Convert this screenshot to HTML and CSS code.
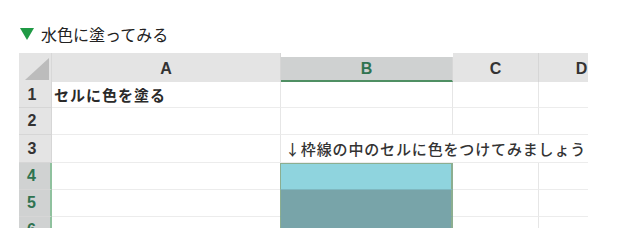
FILE: index.html
```html
<!DOCTYPE html>
<html lang="ja">
<head>
    <meta charset="UTF-8">
    <title>水色に塗ってみる</title>
    <link rel="stylesheet" href="styles.css">
</head>
<body>
    <div class="page">
        <h3 class="title"><span class="mark"></span>水色に塗ってみる</h3>
        <div class="sheet">
            <div class="corner"></div>
            <div class="col">A</div>
            <div class="col sel">B</div>
            <div class="col">C</div>
            <div class="col">D</div>

            <div class="num">1</div>
            <div class="cell bold">セルに色を塗る</div>
            <div class="cell"></div>
            <div class="cell"></div>
            <div class="cell"></div>

            <div class="num">2</div>
            <div class="cell"></div>
            <div class="cell"></div>
            <div class="cell"></div>
            <div class="cell"></div>

            <div class="num">3</div>
            <div class="cell"></div>
            <div class="cell wide">↓枠線の中のセルに色をつけてみましょう</div>

            <div class="num sel">4</div>
            <div class="cell"></div>
            <div class="cell light top"></div>
            <div class="cell"></div>
            <div class="cell"></div>

            <div class="num sel">5</div>
            <div class="cell"></div>
            <div class="cell dark"></div>
            <div class="cell"></div>
            <div class="cell"></div>

            <div class="num sel">6</div>
            <div class="cell"></div>
            <div class="cell dark"></div>
            <div class="cell"></div>
            <div class="cell"></div>
        </div>
    </div>
</body>
</html>
```

FILE: styles.css
```css
body{
    margin: 0;
    background: #fff;
    font-family: "Noto Sans CJK JP", "Noto Sans", sans-serif;
    color: #222;
}
.page{
    padding: 24px 0 0 19px;
}
.title{
    display: flex;
    align-items: center;
    gap: 7px;
    margin: 0 0 9px 1px;
    font-size: 16px;
    font-weight: normal;
    line-height: 20px;
    color: #222;
}
.mark{
    width: 0;
    height: 0;
    border-left: 7px solid transparent;
    border-right: 7px solid transparent;
    border-top: 12px solid #1f9a45;
}
.sheet{
    display: grid;
    grid-template-columns: 33px 229px 172px 86px 86px;
    grid-template-rows: 29px 26px 27px 28px 27px 27px 27px;
    width: 569px;
    height: 175px;
    overflow: hidden;
}
.corner{
    position: relative;
    background: #e4e4e4;
    border-right: 1px solid #d8d8d8;
}
.corner::after{
    content: "";
    position: absolute;
    right: 2px;
    bottom: 2px;
    width: 24px;
    height: 22px;
    background: #bcbcbc;
    clip-path: polygon(100% 0, 100% 100%, 0 100%);
}
.col{
    display: flex;
    align-items: flex-end;
    justify-content: center;
    padding-bottom: 4px;
    background: #e4e4e4;
    border-right: 1px solid #d6d6d6;
    font-family: "Liberation Sans", Arial, sans-serif;
    font-weight: bold;
    font-size: 16px;
    color: #333;
    box-sizing: border-box;
}
.col.sel{
    margin-top: 4px;
    background: #cfd1d1;
    border-bottom: 2px solid #4f8f63;
    color: #2f7350;
    padding-bottom: 2px;
}
.num{
    display: flex;
    align-items: center;
    justify-content: center;
    padding-right: 6px;
    background: #e4e4e4;
    border-bottom: 1px solid #d6d6d6;
    border-right: 1px solid #d6d6d6;
    font-family: "Liberation Sans", Arial, sans-serif;
    font-weight: bold;
    font-size: 16px;
    color: #333;
}
.num.sel{
    background: #d0d2d2;
    border-right: 2px solid #8fc19e;
    color: #2f7350;
}
.cell{
    display: flex;
    align-items: center;
    padding-left: 2px;
    border-right: 1px solid #e6e6e6;
    border-bottom: 1px solid #ececec;
    font-size: 15px;
    white-space: nowrap;
    color: #333;
}
.bold{
    font-weight: bold;
    letter-spacing: 1px;
    color: #2a2a2a;
}
.wide{
    grid-column: span 3;
    padding-left: 4px;
    letter-spacing: 0.85px;
    font-weight: 500;
}
.light{
    background: #8fd4de;
    border-right: 2px solid #8cae90;
    border-bottom: 1px solid #7fb8c0;
    border-left: 1px solid #8cae90;
    margin-left: -1px;
}
.top{
    border-top: 1px solid #8cae90;
}
.dark{
    background: #78a4a9;
    border-right: 2px solid #8cae90;
    border-bottom: 1px solid #78a4a9;
    border-left: 1px solid #8cae90;
    margin-left: -1px;
}
```
